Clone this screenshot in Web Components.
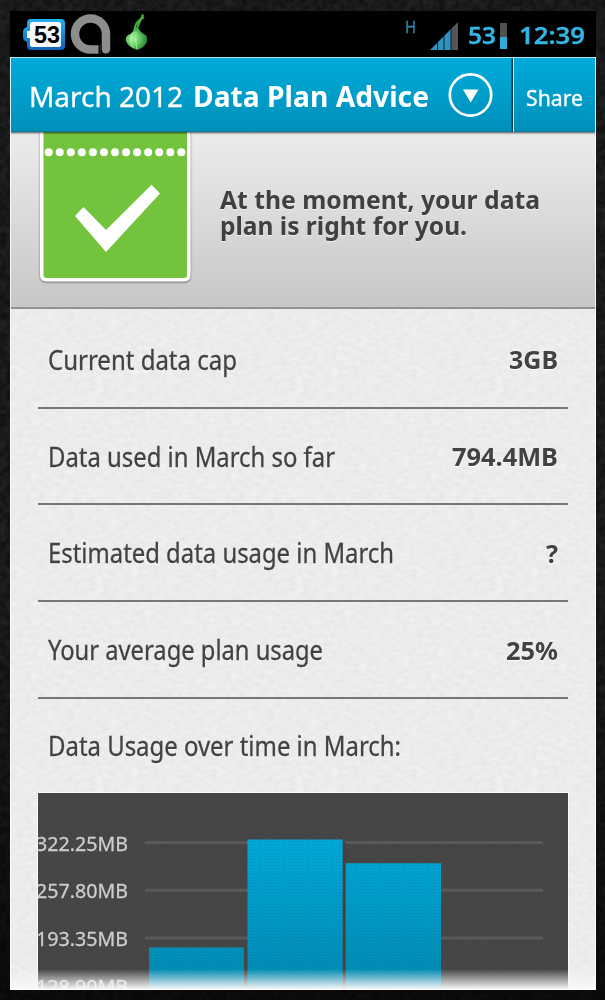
<!DOCTYPE html>
<html lang="en"><head><meta charset="utf-8"><title>Data Plan Advice</title>
<style>
html,body{margin:0;width:605px;height:1000px;overflow:hidden;background:#141414}
body{font-family:"Noto Sans","Open Sans",sans-serif}
</style></head><body>
<plan-app></plan-app>
<script>
function define(name, html, setup){
  const t=document.createElement('template'); t.innerHTML=html;
  customElements.define(name, class extends HTMLElement{
    connectedCallback(){
      if(this.shadowRoot) return;
      this.attachShadow({mode:'open'}).appendChild(t.content.cloneNode(true));
      if(setup) setup(this,this.shadowRoot);
    }
  });
}

/* One line of text, condensed or widened to the width given. */
define('fit-text', `<style>
:host{display:block;white-space:nowrap;flex:none;line-height:1;-webkit-text-stroke:.3px currentColor}
span{display:inline-block;transform-origin:0 50%}
</style><span></span>`, (el,r)=>{
  const s=r.querySelector('span'), w=+el.getAttribute('w');
  s.textContent=el.getAttribute('text');
  el.style.width=w+'px';
  el.style.fontSize=el.getAttribute('size')+'px';
  const n=s.getBoundingClientRect().width;
  if(n) s.style.transform='scaleX('+w/n+')';
});

define('status-bar', `<style>
:host{display:flex;align-items:center;height:46px;background:#000;color:#33b5e5;font-weight:600}
.left{display:block;flex:none}
.h{margin:-15px 14px 0 258px;font-weight:400;color:#2d88b0}
.sig{margin:3px 10px 0 0}.bat{margin:3px 12px 0 4px}
svg{flex:none;display:block}
fit-text{margin-top:1px}
</style>
<svg class="left" width="137" height="46" viewBox="10 11 137 46">
 <defs><linearGradient id="b" x2="0" y2="1"><stop stop-color="#23b4ee"/><stop offset="1" stop-color="#1260b8"/></linearGradient>
 <radialGradient id="o" cx=".35" cy=".5" r=".7"><stop stop-color="#a8f5a0"/><stop offset=".5" stop-color="#5bc35b"/><stop offset="1" stop-color="#1d6f22"/></radialGradient></defs>
 <path d="M31 19H61Q65 19 65 23V46Q65 50 61 50H31Q27 50 27 46V42Q23 41 23 37V32Q23 28 27 27V23Q27 19 31 19Z" fill="url(#b)"/>
 <path d="M32 22H59Q61 22 61 24V45Q61 47 59 47H32Q30 47 30 45V38H27V31H30V24Q30 22 32 22Z" fill="#f7f7fa"/>
 <text x="34" y="43" textLength="26" lengthAdjust="spacingAndGlyphs" font-family="Liberation Sans" font-weight="700" font-size="23" fill="#000">53</text>
 <path d="M98.500 49.500H90.500A15.500 15.500 0 1 1 106 34V49.500" fill="none" stroke="#8d8d8d" stroke-width="8.500"/>
 <path d="M101.800 49h8.500q-.5 4.500-4.500 4.500t-4-4.500z" fill="#8d8d8d"/>
 <path d="M100.300 45V54" stroke="#222" stroke-width="1.500"/>
 <path d="M134.500 30C135 25 136 22 144 17M137 29C138 24 141 20 143 14.500" fill="none" stroke="#46a63f" stroke-width="2.200"/>
 <path d="M134 29Q137 26 139 29Q141 33 146 35Q148 38 147 42Q144 48 137 50Q128 47 126 41Q125 37 128 35Q133 33 134 29Z" fill="url(#o)"/>
 <path d="M134 32Q127 40 134 48M136 32Q135 41 137 49" fill="none" stroke="#d1ffcb" stroke-width="1.200" opacity=".5"/>
</svg>
<fit-text class="h" text="H" w="11" size="16"></fit-text>
<svg class="sig" width="28" height="28" viewBox="431 21 28 28">
 <clipPath id="c"><path d="M431 49L459 21V49Z"/></clipPath>
 <g clip-path="url(#c)"><path d="M431 21h21v28h-21z" fill="#2f91bd"/><path d="M452 21h7v28h-7z" fill="#555"/><path d="M438.500 21v28M445 21v28M452 21v28" stroke="#08212d" stroke-width="1"/></g>
</svg>
<fit-text text="53" w="28" size="24"></fit-text>
<svg class="bat" width="7" height="26"><path d="M0 0h7v26H0z" fill="#505050"/><path d="M0 14h7v12H0z" fill="#33a9d8"/></svg>
<fit-text text="12:39" w="66" size="24"></fit-text>`);

define('title-bar', `<style>
:host{display:flex;box-sizing:border-box;height:75px;color:#fff;background:#183843;border-top:1px solid #b9e2ee;position:relative;z-index:1;box-shadow:0 1px 2px rgba(0,0,0,.65)}
div{display:flex;align-items:center;background:linear-gradient(#00abda,#008fb9);box-shadow:inset 0 -1px #087a9d}
.main{width:502px;box-sizing:border-box;padding-left:19px;border-right:1px solid #086b89}
.share{flex:1;margin-left:1px;border-left:1px solid #c9e9f2;padding-left:12px}
.main fit-text{margin-top:2px}.bold{font-weight:700;margin-left:10px;-webkit-text-stroke-width:0}
svg{margin:-1px 0 0 18px}
.share fit-text{margin-top:3px}
</style>
<div class="main"><fit-text text="March 2012" w="154" size="28"></fit-text>
<fit-text class="bold" text="Data Plan Advice" w="236" size="28"></fit-text>
<svg width="46" height="46" viewBox="0 0 46 46"><circle cx="23.500" cy="23" r="20.700" fill="none" stroke="#fff" stroke-width="2.700"/><path d="M16 17.500H31.500L23.700 30.500Z" fill="#fff"/></svg></div>
<div class="share"><fit-text text="Share" w="57" size="22"></fit-text></div>`);

define('advice-banner', `<style>
:host{display:flex;box-sizing:border-box;height:177px;padding-left:30px;background:linear-gradient(#ececec,#c7c7c7);border-bottom:2px solid #929292}
svg{flex:none;display:block;filter:drop-shadow(0 1px 1px rgba(0,0,0,.45))}
.msg{margin:56px 0 0 29px;font-weight:700;color:#404040;text-shadow:0 1px #eee}
.msg fit-text{height:26px;-webkit-text-stroke-width:0}
</style>
<svg width="151" height="152" viewBox="40 132 151 152"><path d="M40 120H190.500V275Q190.500 281.500 184 281.500H46.500Q40 281.500 40 275Z" fill="#fff"/><path d="M43.500 120H187V275Q187 278 184 278H46.500Q43.500 278 43.500 275Z" fill="#73c43c"/><path d="M48.700 152.300H182" stroke="#fff" stroke-width="8" stroke-linecap="round" stroke-dasharray="0 11.050"/><path d="M75 216L83.500 207L106 230L151.500 184.800L160 193.500L106 252Z" fill="#fff"/></svg>
<div class="msg"><fit-text text="At the moment, your data" w="320" size="24.500"></fit-text><fit-text text="plan is right for you." w="247" size="24.500"></fit-text></div>`);

function row(label,w,value,vw,cls=''){
  return `<data-row class="${cls}"><fit-text text="${label}" w="${w}" size="26.500"></fit-text>${value?`<fit-text class="v" text="${value}" w="${vw}" size="25"></fit-text>`:''}</data-row>`;
}
define('data-row', `<style>
:host{display:flex;justify-content:space-between;align-items:center;box-sizing:border-box;height:96.700px;margin:0 28px;padding:2px 10px 0 10px;color:#424242;border-bottom:2px solid #777;text-shadow:0 1px #fff}
:host(.first){height:99.500px;padding-top:4px}
:host(.last){border-color:transparent;height:94px;padding-top:4px}
::slotted(.v){font-weight:700;-webkit-text-stroke-width:0!important}
</style><slot></slot>`);

define('usage-chart', `<style>
:host{display:flex;height:230px;margin:0 28px;overflow:hidden;background:repeating-linear-gradient(45deg,#444 0 2px,#474747 2px 4px);box-shadow:0 0 0 1px #fafafa}
.labels{width:107px;color:#cdcdcd;padding-top:41px;box-sizing:border-box}
.labels fit-text{height:47.700px;margin-left:-2px}
svg{display:block;flex:none}
</style>
<div class="labels"><fit-text text="322.25MB" w="92" size="20"></fit-text><fit-text text="257.80MB" w="92" size="20"></fit-text><fit-text text="193.35MB" w="92" size="20"></fit-text><fit-text text="128.90MB" w="92" size="20"></fit-text></div>
<svg width="398" height="230" viewBox="145 792 398 230">
<defs><linearGradient id="g" gradientUnits="userSpaceOnUse" x1="0" y1="838" x2="0" y2="990"><stop stop-color="#00addd"/><stop offset="1" stop-color="#008bb4"/></linearGradient>
<pattern id="p" width="3" height="3" patternUnits="userSpaceOnUse"><path d="M0 0h1v1H0zM1.500 1.500h1v1h-1z" fill="#034a62" opacity=".3"/></pattern></defs>
<path d="M145 841.500H543M145 889.200H543M145 937H543" stroke="#5d5858" stroke-width="3"/>
<path d="M343 841H346V1022H343Z" fill="#583b35"/>
<path d="M149 946.500H244V1022H149ZM247.500 838.500H342.700V1022H247.500ZM345.700 862.300H441V1022H345.700Z" fill="url(#g)"/>
<path d="M149 946.500H244V1022H149ZM247.500 838.500H342.700V1022H247.500ZM345.700 862.300H441V1022H345.700Z" fill="url(#p)"/></svg>`);

define('plan-app', `<style>
:host{display:grid;width:605px;height:1000px;box-sizing:border-box;padding:11px 9px 10px 10px;
background:linear-gradient(rgba(0,0,0,0) 60%,rgba(0,0,0,.6)),url("data:image/svg+xml,%3Csvg xmlns='http://www.w3.org/2000/svg' width='605' height='1000'%3E%3Cfilter id='n' color-interpolation-filters='sRGB'%3E%3CfeTurbulence type='fractalNoise' baseFrequency='.15' numOctaves='4'/%3E%3CfeColorMatrix values='.12 0 0 0 .04 .12 0 0 0 .04 .12 0 0 0 .04 0 0 0 0 1'/%3E%3C/filter%3E%3Crect width='605' height='1000' filter='url(%23n)'/%3E%3C/svg%3E")}
.screen{display:flex;flex-direction:column;overflow:hidden;min-height:0;position:relative;box-sizing:border-box;
background:url("data:image/svg+xml,%3Csvg xmlns='http://www.w3.org/2000/svg' width='200' height='200'%3E%3Cfilter id='n' x='0' y='0' width='1' height='1' color-interpolation-filters='sRGB'%3E%3CfeTurbulence type='fractalNoise' baseFrequency='.14 .22' numOctaves='2' stitchTiles='stitch'/%3E%3CfeColorMatrix values='.06 0 0 0 .895 .06 0 0 0 .895 .06 0 0 0 .895 0 0 0 0 1'/%3E%3C/filter%3E%3Crect width='200' height='200' filter='url(%23n)'/%3E%3C/svg%3E")}
.screen>*{flex:none}
.fade{position:absolute;left:0;right:0;bottom:0;height:21px;background:linear-gradient(rgba(245,245,245,0),rgba(248,248,248,.93) 90%,#fff)}
.edge{position:absolute;inset:46px 0 0;border:1px solid rgba(255,255,255,.85);border-top:0;z-index:2}
</style>
<div class="screen"><status-bar></status-bar><title-bar></title-bar><advice-banner></advice-banner>
${row('Current data cap',189,'3GB',49,'first')}${row('Data used in March so far',287,'794.4MB',106)}${row('Estimated data usage in March',346,'?',12)}${row('Your average plan usage',275,'25%',52)}${row('Data Usage over time in March:',353,'',0,'last')}
<usage-chart></usage-chart><div class="fade"></div><div class="edge"></div></div>`);
</script></body></html>
